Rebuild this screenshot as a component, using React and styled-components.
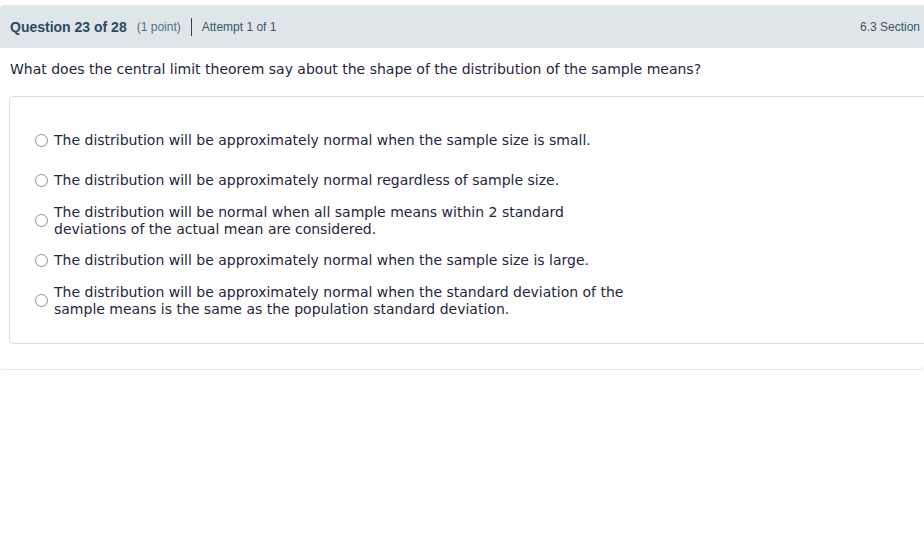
import React from "react";
import styled, { createGlobalStyle } from "styled-components";

const Global = createGlobalStyle`
  html, body { margin: 0; padding: 0; background: #fff; overflow: hidden; }
  body { font-family: "DejaVu Sans", Verdana, sans-serif; }
`;

const Page = styled.div`
  width: 924px;
  padding-top: 5px;
`;

const Wrapper = styled.div`
  padding-bottom: 25px;
  border-bottom: 1px solid #e2e6e8;
  border-radius: 0 0 4px 4px;
`;

const Header = styled.div`
  display: flex;
  align-items: center;
  height: 43px;
  padding: 0 4px 0 10px;
  background: #dfe6e9;
  border-radius: 4px 0 0 0;
  font-family: "Liberation Sans", Arial, sans-serif;
`;

const QTitle = styled.span`
  font-size: 14px;
  font-weight: bold;
  color: #2a4b5d;
`;

const Points = styled.span`
  font-size: 12px;
  color: #4f7087;
  margin-left: 10px;
`;

const Divider = styled.span`
  width: 1px;
  height: 18px;
  background: #2c4352;
  margin: 0 10px 0 10px;
`;

const Attempt = styled.span`
  font-size: 12px;
  color: #3b5667;
`;

const Section = styled.span`
  margin-left: auto;
  font-size: 12px;
  color: #3b5667;
`;

const Prompt = styled.p`
  margin: 13px 0 0 10px;
  font-size: 14px;
  line-height: 17px;
  color: #1e2540;
`;

const Card = styled.div`
  margin: 18px 0 0 9px;
  border: 1px solid #d5dbde;
  border-right: none;
  border-radius: 5px 0 0 5px;
  padding: 23px 0 23px 25px;
`;

const Option = styled.label`
  display: flex;
  align-items: center;
  min-height: 40px;
  cursor: pointer;
`;

const Radio = styled.span`
  flex: none;
  width: 11px;
  height: 11px;
  border: 1px solid #8c8c8c;
  border-radius: 50%;
  background: #fff;
  margin-right: 6px;
`;

const Text = styled.span`
  max-width: 580px;
  padding-top: 1px;
  font-size: 14px;
  line-height: 17px;
  color: #1e2540;
`;

const options = [
  "The distribution will be approximately normal when the sample size is small.",
  "The distribution will be approximately normal regardless of sample size.",
  "The distribution will be normal when all sample means within 2 standard deviations of the actual mean are considered.",
  "The distribution will be approximately normal when the sample size is large.",
  "The distribution will be approximately normal when the standard deviation of the sample means is the same as the population standard deviation.",
];

export default function App() {
  return (
    <Page>
      <Global />
      <Wrapper>
        <Header>
          <QTitle>Question 23 of 28</QTitle>
          <Points>(1 point)</Points>
          <Divider />
          <Attempt>Attempt 1 of 1</Attempt>
          <Section>6.3 Section</Section>
        </Header>
        <Prompt>
          What does the central limit theorem say about the shape of the distribution of the sample means?
        </Prompt>
        <Card>
          {options.map((o) => (
            <Option key={o}>
              <Radio />
              <Text>{o}</Text>
            </Option>
          ))}
        </Card>
      </Wrapper>
    </Page>
  );
}
